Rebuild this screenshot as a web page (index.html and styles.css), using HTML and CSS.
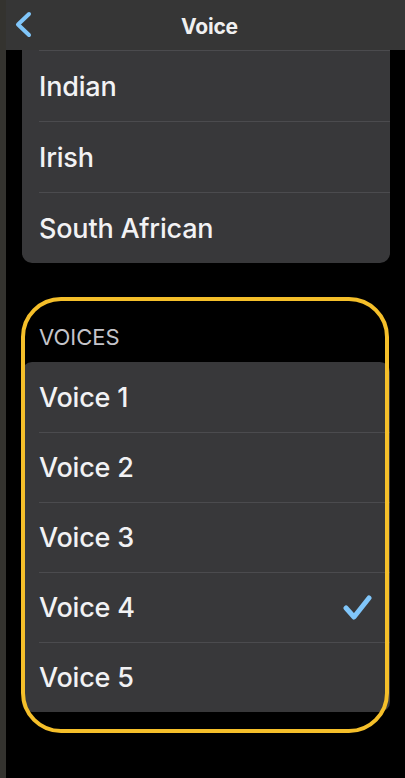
FILE: index.html
```html
<!DOCTYPE html>
<html lang="en">
<head>
    <meta charset="UTF-8">
    <meta name="viewport" content="width=device-width, initial-scale=1.0">
    <title>Voice</title>
    <link rel="stylesheet" href="styles.css">
</head>
<body>
    <div class="edge"></div>
    <div class="screen">
        <header class="nav">
            <a class="back" href="#">
                <svg width="20" height="30" viewBox="0 0 20 30">
                    <polyline points="15,4 4,14.5 15,25" fill="none" stroke="#80c6fa" stroke-width="4" stroke-linecap="round" stroke-linejoin="round"/>
                </svg>
            </a>
            <h1>Voice</h1>
            <span></span>
        </header>

        <div class="content">
            <ul class="card card-top">
                <li>Indian</li>
                <li>Irish</li>
                <li>South African</li>
            </ul>

            <section class="voices">
                <div class="highlight"></div>
                <h2>VOICES</h2>
                <ul class="card">
                    <li>Voice 1</li>
                    <li>Voice 2</li>
                    <li>Voice 3</li>
                    <li>Voice 4
                        <svg class="check" width="30" height="30" viewBox="0 0 30 30">
                            <polyline points="4,15 12,24 27,5" fill="none" stroke="#80c6fa" stroke-width="5" stroke-linecap="round" stroke-linejoin="round"/>
                        </svg>
                    </li>
                    <li>Voice 5</li>
                </ul>
            </section>
        </div>
    </div>
</body>
</html>
```

FILE: styles.css
```css
html, body {
    height: 100%;
}
body {
    margin: 0;
    background-color: #000;
    font-family: 'Inter', 'Liberation Sans', sans-serif;
    display: flex;
}
.edge {
    width: 6px;
    flex-shrink: 0;
    background-color: #34332f;
}
.screen {
    flex: 1;
    display: flex;
    flex-direction: column;
}
.nav {
    height: 50px;
    background-color: #363636;
    display: grid;
    grid-template-columns: 1fr auto 1fr;
    align-items: center;
    padding-left: 8px;
}
.back {
    display: flex;
    width: 20px;
}
.nav h1 {
    margin: 2px 0 0;
    color: #f0f0f0;
    font-size: 21px;
    font-weight: 700;
    letter-spacing: -0.2px;
}
.content {
    padding: 0 15px 0 16px;
}
ul.card {
    list-style-type: none;
    margin: 0;
    padding: 0;
    background-color: #38383a;
    border-radius: 0 0 10px 10px;
}
.card li {
    height: 70px;
    margin-left: 17px;
    padding-right: 18px;
    display: flex;
    align-items: center;
    justify-content: space-between;
    color: #f2f2f4;
    font-size: 27px;
    font-weight: 500;
    letter-spacing: -0.2px;
    border-top: 1px solid #4b4b4e;
}
.voices ul.card {
    border-radius: 10px;
}
.voices .card li:first-child {
    border-top: none;
}
.voices .card li + li {
    height: 69px;
}
.voices {
    position: relative;
    margin-top: 61px;
}
.voices h2 {
    margin: 0 0 12px 17px;
    height: 26px;
    line-height: 26px;
    color: #c4c4ca;
    font-size: 22px;
    font-weight: 400;
}
.highlight {
    position: absolute;
    top: -27px;
    left: -1px;
    width: 368px;
    height: 436px;
    box-sizing: border-box;
    border: 4px solid #f5bf2a;
    border-radius: 40px;
    pointer-events: none;
    z-index: 1;
}
.check {
    display: block;
}
```
